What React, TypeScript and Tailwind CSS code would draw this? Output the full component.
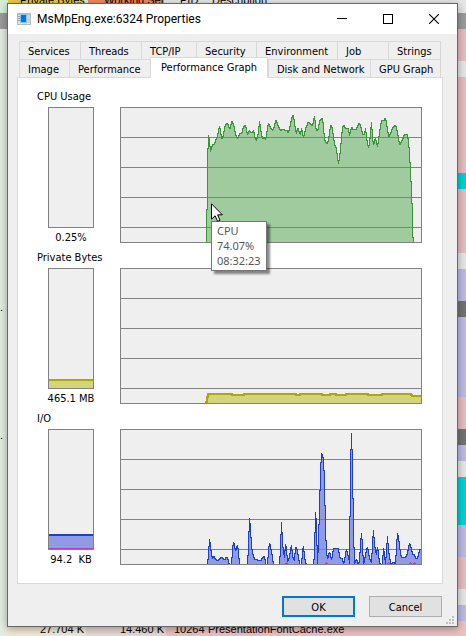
import { useState, type ReactNode } from "react";
import clsx from "clsx";

type Point = [number, number];

const ROW_COLORS = [
  "bg-[#9b9b9b]",
  "bg-[#e8bdbf]",
  "bg-[#e8bdbf]",
  "bg-[#e6e6e6]",
  ...Array(6).fill("bg-[#e8bdbf]"),
  "bg-[#00d2d4]",
  ...Array(4).fill("bg-[#e8bdbf]"),
  "bg-[#e6e6e6]",
  "bg-[#bdbbe6]",
  "bg-[#bdbbe6]",
  "bg-[#737373]",
  ...Array(5).fill("bg-[#bdbbe6]"),
  "bg-[#e8bdbf]",
  "bg-[#e8bdbf]",
  "bg-[#737373]",
  "bg-[#bdbbe6]",
  "bg-[#e6e6e6]",
  ...Array(3).fill("bg-[#00d2d4]"),
  "bg-[#bdbbe6]",
  "bg-[#bdbbe6]",
  "bg-[#e8bdbf]",
  "bg-[#e8bdbf]",
  "bg-[#e6e6e6]",
  "bg-[#bdbbe6]",
] as string[];

const CPU: Point[] = [
  [86, 135], [86, 108], [87, 95], [87, 54], [88, 27], [89, 33], [90, 44], [91, 40], [92, 37], [94, 36],
  [95, 33], [97, 28], [98, 23], [99, 18], [100, 23], [101, 31], [103, 28], [104, 20], [106, 16], [107, 15],
  [109, 21], [110, 21], [111, 13], [113, 16], [114, 22], [115, 26], [117, 31], [119, 26], [121, 26], [123, 19],
  [125, 17], [126, 23], [127, 27], [129, 22], [130, 25], [132, 25], [133, 22], [134, 28], [136, 33], [137, 29],
  [138, 25], [139, 13], [141, 27], [142, 31], [144, 29], [145, 32], [146, 27], [148, 15], [149, 18], [151, 21],
  [152, 23], [154, 19], [155, 12], [157, 16], [159, 21], [160, 23], [162, 21], [165, 23], [166, 22], [168, 25],
  [169, 21], [171, 11], [173, 7], [174, 16], [176, 26], [177, 20], [180, 27], [181, 20], [183, 30], [185, 21],
  [188, 14], [190, 16], [192, 18], [194, 8], [195, 18], [196, 23], [198, 21], [199, 13], [202, 10], [203, 20],
  [204, 31], [205, 34], [207, 36], [209, 26], [210, 17], [212, 21], [213, 30], [214, 36], [216, 41], [217, 50],
  [218, 56], [219, 50], [220, 41], [221, 30], [222, 20], [223, 17], [225, 21], [228, 21], [229, 28], [231, 19],
  [233, 22], [236, 22], [237, 18], [239, 15], [241, 21], [242, 26], [244, 27], [245, 20], [246, 30], [248, 40],
  [249, 36], [251, 14], [252, 30], [253, 37], [255, 30], [257, 39], [259, 25], [261, 12], [263, 13], [265, 10],
  [267, 21], [268, 29], [270, 26], [272, 20], [275, 17], [277, 25], [279, 37], [281, 34], [284, 27], [286, 26],
  [287, 27], [288, 34], [289, 46], [290, 63], [291, 85], [292, 106], [292, 125], [293, 135],
];

const PRIVATE_BYTES: Point[] = [
  [85, 135], [86, 131], [87, 125], [111, 125], [111, 126], [123, 126], [123, 125], [175, 125], [175, 126],
  [179, 126], [179, 125], [201, 125], [201, 126], [209, 126], [209, 125], [215, 125], [215, 126], [225, 126],
  [225, 125], [247, 125], [247, 126], [261, 126], [261, 125], [290, 125], [291, 127], [301, 127],
];

const IO: Point[] = [
  [87, 136], [88, 124], [89, 109], [90, 117], [91, 124], [92, 129], [93, 126], [95, 129], [96, 131], [98, 130],
  [101, 127], [104, 130], [106, 127], [108, 131], [109, 136], [111, 136], [112, 120], [113, 112], [114, 116],
  [115, 121], [117, 115], [118, 122], [119, 136], [127, 136], [128, 115], [129, 88], [130, 99], [131, 117],
  [133, 127], [135, 130], [140, 131], [142, 128], [144, 126], [145, 134], [146, 136], [147, 136], [148, 120],
  [149, 113], [150, 117], [152, 127], [153, 136], [159, 136], [160, 117], [161, 92], [162, 114], [164, 128],
  [165, 114], [166, 120], [167, 132], [169, 127], [170, 120], [171, 115], [172, 126], [174, 131], [175, 117],
  [177, 120], [178, 129], [180, 136], [181, 136], [182, 122], [183, 116], [184, 127], [186, 136], [187, 135],
  [188, 136], [193, 136], [194, 124], [195, 82], [196, 96], [197, 136], [198, 109], [199, 80], [200, 42],
  [201, 23], [203, 29], [204, 53], [205, 99], [206, 123], [207, 129], [209, 122], [211, 130], [213, 119],
  [218, 119], [219, 126], [220, 129], [222, 128], [223, 136], [226, 119], [227, 124], [229, 131], [229, 136],
  [230, 37], [231, 3], [232, 36], [233, 102], [234, 134], [236, 129], [238, 135], [239, 131], [240, 115],
  [241, 103], [242, 117], [243, 135], [245, 125], [247, 117], [249, 129], [251, 133], [252, 114], [253, 100],
  [254, 115], [256, 125], [257, 117], [259, 132], [260, 136], [262, 134], [263, 118], [264, 125], [265, 134],
  [266, 122], [267, 106], [268, 121], [270, 132], [271, 136], [273, 132], [275, 135], [276, 117], [277, 103],
  [279, 114], [280, 125], [282, 128], [285, 128], [287, 123], [289, 113], [291, 119], [292, 125], [294, 124],
  [295, 129], [297, 129], [299, 120], [301, 119],
];

const IO_WRITES = [165, 205, 267, 289, 293];

// Walks the samples one pixel column at a time so the outline is stepped, not slanted.
function steppedPath(points: Point[]) {
  let [x, y] = points[0];
  let path = `V${y}`;
  for (const [nextX, nextY] of points.slice(1)) {
    const columns = nextX - x;
    const startY = y;
    for (let i = 1; i <= columns; i++) {
      const target = Math.round(startY + ((nextY - startY) * i) / columns);
      path += `V${Math.round((y + target) / 2)}H${x + i}V${target}`;
      y = target;
    }
    if (columns === 0) path += `V${nextY}`;
    x = nextX;
    y = nextY;
  }
  return path;
}

function Backdrop() {
  return (
    <div
      aria-hidden="true"
      className="absolute inset-0 -z-10 flex flex-col overflow-hidden bg-[#e3ebe3] font-['Liberation_Sans',sans-serif] text-[11px] leading-4 text-black"
    >
      <div className="flex h-[13px] shrink-0 items-start bg-[#e6e6e6]">
        <div className="w-2 shrink-0 self-stretch bg-[#d7efd9]" />
        <div className="-mt-2 h-5 w-[76px] shrink-0 bg-[#e8cb4d] pl-3 whitespace-nowrap">Private Bytes</div>
        <div className="-mt-2 ml-1 h-5 w-[76px] shrink-0 bg-[#ec8a60] pl-4 whitespace-nowrap">Working Set</div>
        <div className="-mt-2 w-12 pl-4">PID</div>
        <div className="-mt-2">Description</div>
      </div>
      {ROW_COLORS.map((color, i) => (
        <div key={i} className="flex h-4 shrink-0">
          <div className={clsx("w-10 shrink-0 leading-3", i === 0 ? "bg-[#9b9b9b]" : "bg-[#e3ebe3]")}>
            {(i === 18 || i === 26) && "."}
          </div>
          <div className={clsx("flex-1", color)} />
        </div>
      ))}
      <div className="flex h-4 shrink-0 whitespace-nowrap">
        <div className="w-1.5 shrink-0 bg-[#e3efe6]" />
        <div className="w-20 shrink-0 bg-[#f1ead6] pr-0.5 text-right">27.704 K</div>
        <div className="w-20 shrink-0 bg-[#e8dad4] pr-0.5 text-right">14.460 K</div>
        <div className="w-[42px] shrink-0 bg-[#edc1c2] pl-2">10264</div>
        <div className="flex-1 bg-[#edc1c2]">PresentationFontCache.exe</div>
      </div>
    </div>
  );
}

function TitleBar() {
  return (
    <header className="flex h-[30px] shrink-0 items-center bg-white pl-[9px]">
      <svg width="14" height="12" viewBox="0 0 14 12" shapeRendering="crispEdges" aria-hidden="true">
        <rect width="14" height="12" fill="#b4bcc0" />
        <rect x="1" y="2" width="12" height="9" fill="#dfe4e6" />
        <rect x="1" y="3" width="2" height="1" fill="#8fa0a8" />
        <rect x="1" y="5" width="2" height="1" fill="#8fa0a8" />
        <rect x="1" y="7" width="2" height="1" fill="#8fa0a8" />
        <rect x="10" y="2" width="3" height="8" fill="#c8d3d8" />
        <rect x="3" y="1" width="7" height="9" fill="#8cc4ee" />
        <rect x="4" y="2" width="5" height="7" fill="#0078d7" />
      </svg>
      <h1 className="ml-1.5 flex-1 font-['Roboto',sans-serif] text-xs whitespace-nowrap">
        MsMpEng.exe:6324 Properties
      </h1>
      <button type="button" aria-label="Minimize" className="flex h-full w-[46px] items-center justify-center">
        <svg width="10" height="10" shapeRendering="crispEdges">
          <path d="M0 4.5H10" stroke="#000" />
        </svg>
      </button>
      <button type="button" aria-label="Maximize" className="flex h-full w-[46px] items-center justify-center">
        <svg width="10" height="10" shapeRendering="crispEdges">
          <rect x="0.5" y="0.5" width="9" height="9" fill="none" stroke="#000" />
        </svg>
      </button>
      <button type="button" aria-label="Close" className="flex h-full w-[46px] items-center justify-center">
        <svg width="10" height="10">
          <path d="M0 0L10 10M10 0L0 10" stroke="#000" strokeWidth="1.1" />
        </svg>
      </button>
    </header>
  );
}

const TOP_TABS = [
  { name: "Services", size: "basis-[61px]" },
  { name: "Threads", size: "basis-[61px]" },
  { name: "TCP/IP", size: "basis-[55px]" },
  { name: "Security", size: "basis-[60px]" },
  { name: "Environment", size: "basis-[81px]" },
  { name: "Job", size: "basis-[51px]" },
  { name: "Strings", size: "basis-[53px]" },
];

const BOTTOM_TABS = [
  { name: "Image", size: "basis-[50px]" },
  { name: "Performance", size: "basis-[81px]" },
  { name: "Performance Graph", size: "basis-[118px]" },
  { name: "Disk and Network", size: "basis-[102px]" },
  { name: "GPU Graph", size: "basis-[71px]" },
];

function TabRow({
  tabs,
  active,
  onSelect,
}: {
  tabs: { name: string; size: string }[];
  active: string;
  onSelect: (name: string) => void;
}) {
  return (
    <div className="mx-0.5 flex h-[18px] border-r border-[#d9d9d9]">
      {tabs.map((tab) => {
        const selected = tab.name === active;
        return (
          <button
            key={tab.name}
            type="button"
            role="tab"
            aria-selected={selected}
            onClick={() => onSelect(tab.name)}
            className={clsx(
              "shrink-0 grow border-t border-l border-[#d9d9d9] text-left leading-4 whitespace-nowrap",
              tab.size,
              selected ? "relative z-10 -mt-0.5 -mb-px border-r bg-white pl-2.5" : "pt-0.5 pl-2",
            )}
          >
            {tab.name}
          </button>
        );
      })}
    </div>
  );
}

function Gauge({ label, children }: { label: string; children?: ReactNode }) {
  return (
    <div className="flex w-[68px] shrink-0 flex-col items-center">
      <div className="flex h-[121px] w-[46px] flex-col justify-end border border-[#828282] bg-[#efefef]">
        {children}
      </div>
      <span className="pt-px leading-[18px] whitespace-pre">{label}</span>
    </div>
  );
}

function Graph({
  points,
  fill,
  stroke,
  strokeWidth = 1,
  marks = [],
}: {
  points: Point[];
  fill: string;
  stroke: string;
  strokeWidth?: number;
  marks?: number[];
}) {
  const [firstX, firstY] = points[0];
  const line = `M${firstX} ${firstY}${steppedPath(points)}`;

  return (
    <svg
      viewBox="0 0 300 134"
      preserveAspectRatio="none"
      shapeRendering="crispEdges"
      className="block h-[136px] w-full border border-[#828282] bg-[#efefef]"
    >
      <path d={`${line}V136H${firstX}Z`} fill={fill} transform="translate(-0.5 -0.5)" />
      {[29.5, 59.5, 89.5, 119.5].map((y) => (
        <path key={y} d={`M0 ${y}H300`} stroke="#828282" />
      ))}
      <path d={line} fill="none" stroke={stroke} strokeWidth={strokeWidth} transform="translate(-0.5 -0.5)" />
      {marks.map((x) => (
        <path key={x} d={`M${x - 1} 134v-1h1v-1h1v1h1v1z`} fill="#c03cc0" />
      ))}
    </svg>
  );
}

function Section({
  title,
  gauge,
  children,
}: {
  title: string;
  gauge: ReactNode;
  children: ReactNode;
}) {
  return (
    <section>
      <h2 className="mb-0.5 w-fit leading-4">{title}</h2>
      <div className="flex items-start gap-[15px]">
        {gauge}
        <div className="relative min-w-0 flex-1">{children}</div>
      </div>
    </section>
  );
}

function GraphTooltip() {
  return (
    <>
      <div
        role="tooltip"
        className="absolute top-[114px] left-[91px] z-20 border border-[#767676] bg-white px-[5px] py-px font-['Noto_Sans',sans-serif] leading-[15px] text-[#575757] shadow-[3px_3px_2px_rgba(0,0,0,0.45)]"
      >
        <p>CPU</p>
        <p>74.07%</p>
        <p className="pb-px">08:32:23</p>
      </div>
      <svg width="12" height="19" viewBox="0 0 12 19" className="absolute top-24 left-[91px] z-30" aria-hidden="true">
        <path d="M.5.8V16.2L4.1 12.8L6.6 18.4L9 17.3L6.6 11.8H11.4Z" fill="#fff" stroke="#000" strokeWidth="1" />
      </svg>
    </>
  );
}

export default function App() {
  const [tab, setTab] = useState("Performance Graph");

  return (
    <div className="relative isolate flex min-h-screen flex-col overflow-hidden pt-[3px] pr-2 pb-[9px] pl-[7px]">
      <Backdrop />

      <main className="flex flex-1 flex-col border border-[#686868] bg-[#efefef] font-['DejaVu_Sans_Condensed','DejaVu_Sans',sans-serif] text-[11px] text-black shadow-[0_2px_8px_rgba(0,0,0,0.35)]">
        <TitleBar />

        <div role="tablist" className="mx-[9px] mt-[7px] mr-3.5">
          <TabRow tabs={TOP_TABS} active={tab} onSelect={setTab} />
          <TabRow tabs={BOTTOM_TABS} active={tab} onSelect={setTab} />
        </div>

        <div className="mr-3.5 ml-[9px] flex flex-1 flex-col gap-[3px] border border-[#d9d9d9] bg-white pt-[11px] pr-5 pl-[19px]">
          <Section title="CPU Usage" gauge={<Gauge label="0.25%" />}>
            <Graph points={CPU} fill="#9fcb9f" stroke="#3a963a" />
            <GraphTooltip />
          </Section>

          <Section
            title="Private Bytes"
            gauge={
              <Gauge label="465.1 MB">
                <div className="h-[9px] border-t-2 border-[#aaaa00] bg-[#d4d480]" />
              </Gauge>
            }
          >
            <Graph points={PRIVATE_BYTES} fill="#d4d480" stroke="#aaaa00" strokeWidth={2} />
          </Section>

          <Section
            title="I/O"
            gauge={
              <Gauge label="94.2  KB">
                <div className="h-[15px] border-t-2 border-b border-t-[#1f3fc8] border-b-[#c03cc0] bg-[#8f9ce3]" />
              </Gauge>
            }
          >
            <Graph points={IO} fill="#8f9ce3" stroke="#1f3fc8" marks={IO_WRITES} />
          </Section>
        </div>

        <footer className="relative flex shrink-0 justify-end gap-3.5 pt-3 pr-[15px] pb-[9px]">
          <button type="button" className="h-[21px] w-[73px] border-2 border-[#0078d7] bg-[#e1e1e1] pt-0.5 leading-4">
            OK
          </button>
          <button type="button" className="h-[21px] w-[73px] border border-[#adadad] bg-[#e1e1e1] pt-0.5 leading-4">
            Cancel
          </button>
          <svg
            width="8"
            height="8"
            shapeRendering="crispEdges"
            className="absolute right-[3px] bottom-0.5"
            aria-hidden="true"
          >
            <path d="M6 0h2v2h-2zM3 3h2v2h-2zM6 3h2v2h-2zM0 6h2v2h-2zM3 6h2v2h-2zM6 6h2v2h-2z" fill="#bfbfbf" />
          </svg>
        </footer>
      </main>
    </div>
  );
}
